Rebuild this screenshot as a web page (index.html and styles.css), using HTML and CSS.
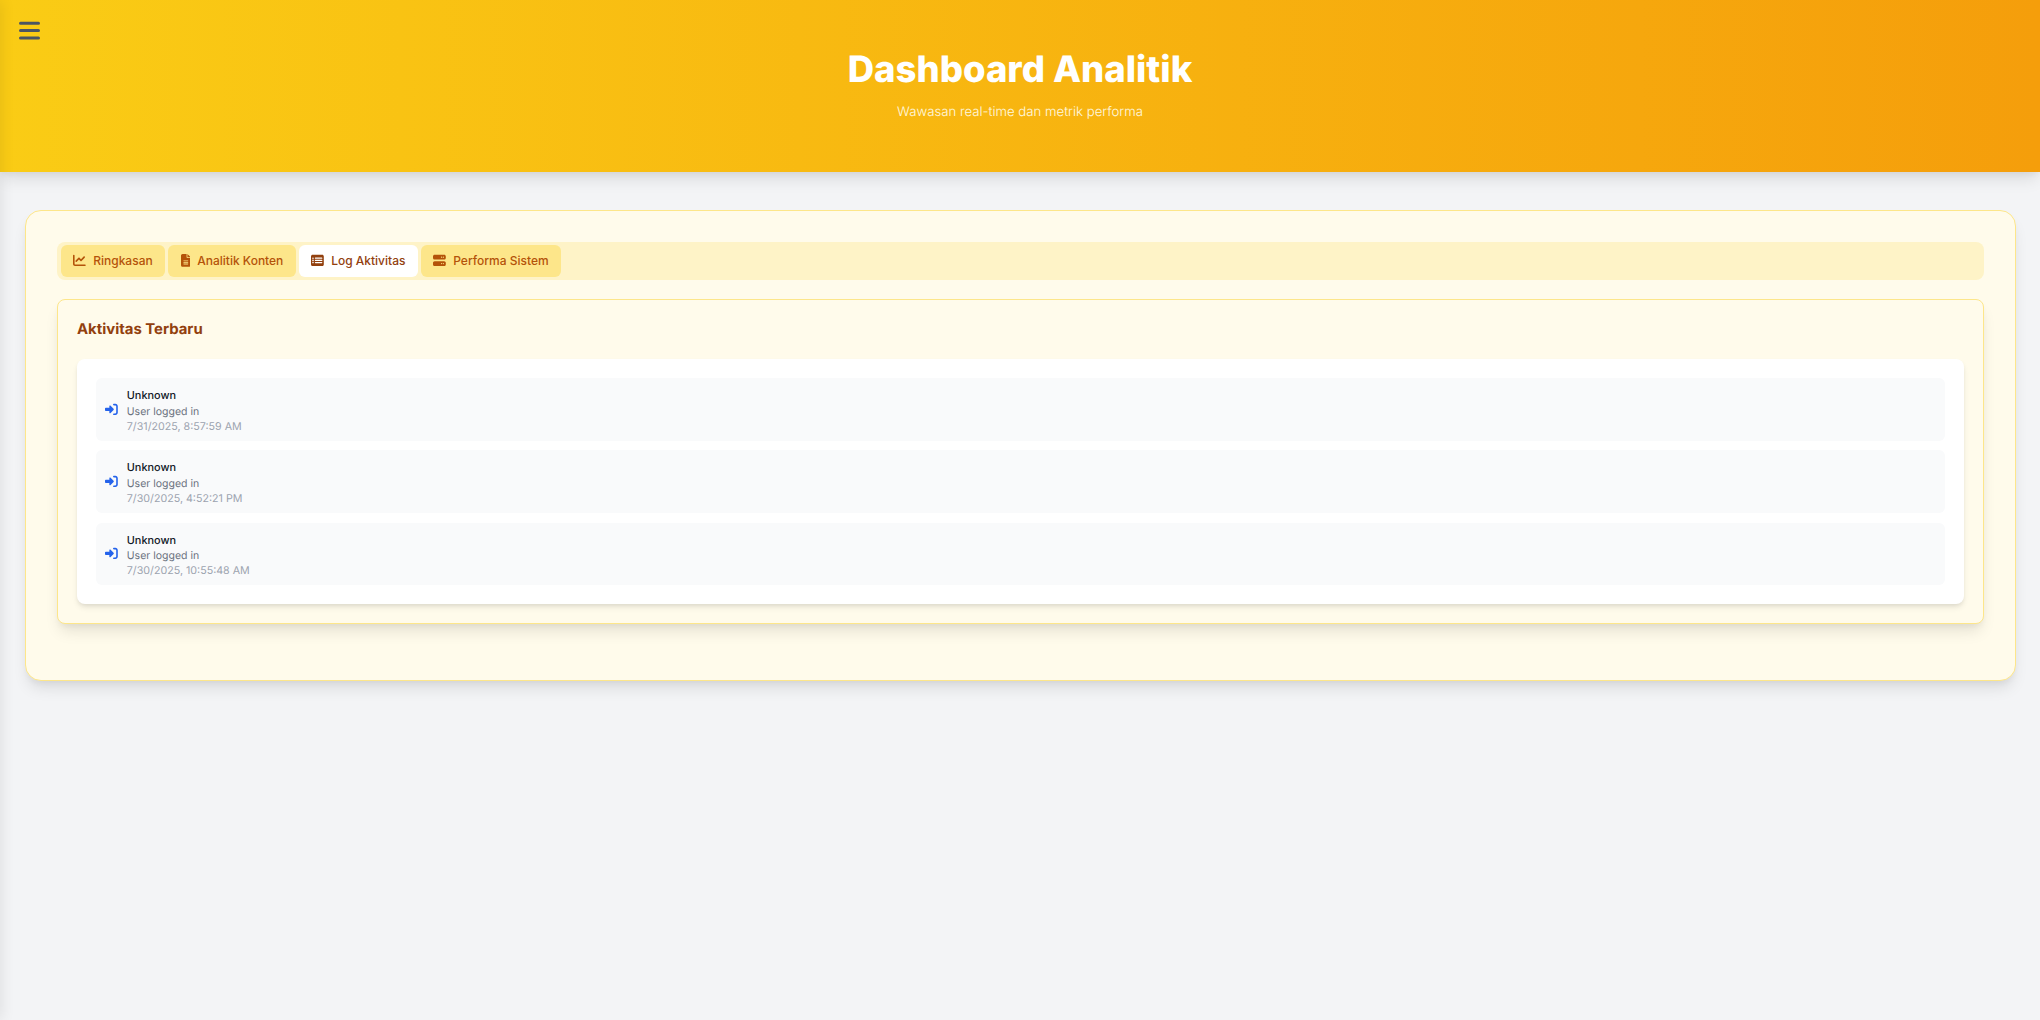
FILE: index.html
```html
<!DOCTYPE html>
<html lang="en">

<head>
    <meta charset="UTF-8">
    <meta name="viewport" content="width=device-width, initial-scale=1.0">
    <title>Dashboard Analitik</title>

    <link rel="stylesheet" href="styles.css">
</head>

<body>

    <div class="sidebar-edge"></div>

    <header class="header">
        <button class="menu-btn" aria-label="Menu">
            <svg viewBox="0 0 24 24" width="24" height="24" fill="none" stroke="#4b5563" stroke-width="3" stroke-linecap="round">
                <path d="M3.5 7.3h18M3.5 14.5h18M3.5 22h18" />
            </svg>
        </button>
        <h1 class="title">Dashboard Analitik</h1>
        <p class="subtitle">Wawasan real-time dan metrik performa</p>
    </header>

    <main class="content">
        <section class="card">

            <!-- tabs -->
            <nav class="tabs">
                <button class="tab">
                    <svg class="tab-icon" viewBox="0 0 512 512"><path d="M64 64c0-18-14-32-32-32S0 46 0 64v336c0 44 36 80 80 80h400c18 0 32-14 32-32s-14-32-32-32H80c-9 0-16-7-16-16V64zm406 86c13-13 13-33 0-46s-33-13-46 0L320 209l-58-58c-13-13-33-13-46 0L106 261c-13 13-13 33 0 46s33 13 46 0l87-87 58 58c13 13 33 13 46 0l127-128z"/></svg>
                    Ringkasan
                </button>
                <button class="tab">
                    <svg class="tab-icon" viewBox="0 0 384 512"><path d="M64 0C29 0 0 29 0 64v384c0 35 29 64 64 64h256c35 0 64-29 64-64V160H256c-18 0-32-14-32-32V0H64zm192 0v128h128L256 0zM112 256h160c9 0 16 7 16 16s-7 16-16 16H112c-9 0-16-7-16-16s7-16 16-16zm0 64h160c9 0 16 7 16 16s-7 16-16 16H112c-9 0-16-7-16-16s7-16 16-16zm0 64h160c9 0 16 7 16 16s-7 16-16 16H112c-9 0-16-7-16-16s7-16 16-16z"/></svg>
                    Analitik Konten
                </button>
                <button class="tab tab-active">
                    <svg class="tab-icon" viewBox="0 0 512 512"><path fill-rule="evenodd" d="M64 32C29 32 0 61 0 96v320c0 35 29 64 64 64h384c35 0 64-29 64-64V96c0-35-29-64-64-64H64zm16 104a32 32 0 1 0 0 64 32 32 0 1 0 0-64zm96 8c-13 0-24 11-24 24s11 24 24 24h256c13 0 24-11 24-24s-11-24-24-24H176zm-96 80a32 32 0 1 0 0 64 32 32 0 1 0 0-64zm96 8c-13 0-24 11-24 24s11 24 24 24h256c13 0 24-11 24-24s-11-24-24-24H176zm-96 80a32 32 0 1 0 0 64 32 32 0 1 0 0-64zm96 8c-13 0-24 11-24 24s11 24 24 24h256c13 0 24-11 24-24s-11-24-24-24H176z"/></svg>
                    Log Aktivitas
                </button>
                <button class="tab">
                    <svg class="tab-icon" viewBox="0 0 512 512"><path fill-rule="evenodd" d="M64 32C29 32 0 61 0 96v64c0 35 29 64 64 64h384c35 0 64-29 64-64V96c0-35-29-64-64-64H64zm280 72a24 24 0 1 1 0 48 24 24 0 1 1 0-48zm48 24a24 24 0 1 1 48 0 24 24 0 1 1-48 0zM64 288c-35 0-64 29-64 64v64c0 35 29 64 64 64h384c35 0 64-29 64-64v-64c0-35-29-64-64-64H64zm280 72a24 24 0 1 1 0 48 24 24 0 1 1 0-48zm48 24a24 24 0 1 1 48 0 24 24 0 1 1-48 0z"/></svg>
                    Performa Sistem
                </button>
            </nav>

            <div class="panel">
                <h2 class="panel-title">Aktivitas Terbaru</h2>

                <div class="activity-box">
                    <div class="activity">
                        <svg class="activity-icon" viewBox="0 0 512 512"><path d="M352 96h64c18 0 32 14 32 32v256c0 18-14 32-32 32h-64c-18 0-32 14-32 32s14 32 32 32h64c53 0 96-43 96-96V128c0-53-43-96-96-96h-64c-18 0-32 14-32 32s14 32 32 32zm-9 183c6-6 9-14 9-23s-3-17-9-23L215 105c-7-7-17-9-26-5s-15 12-15 22v70H32c-18 0-32 14-32 32v64c0 18 14 32 32 32h142v70c0 10 6 18 15 22s19 2 26-5l128-128z"/></svg>
                        <div class="activity-body">
                            <div class="activity-user">Unknown</div>
                            <div class="activity-text">User logged in</div>
                            <div class="activity-time">7/31/2025, 8:57:59 AM</div>
                        </div>
                    </div>
                    <div class="activity">
                        <svg class="activity-icon" viewBox="0 0 512 512"><path d="M352 96h64c18 0 32 14 32 32v256c0 18-14 32-32 32h-64c-18 0-32 14-32 32s14 32 32 32h64c53 0 96-43 96-96V128c0-53-43-96-96-96h-64c-18 0-32 14-32 32s14 32 32 32zm-9 183c6-6 9-14 9-23s-3-17-9-23L215 105c-7-7-17-9-26-5s-15 12-15 22v70H32c-18 0-32 14-32 32v64c0 18 14 32 32 32h142v70c0 10 6 18 15 22s19 2 26-5l128-128z"/></svg>
                        <div class="activity-body">
                            <div class="activity-user">Unknown</div>
                            <div class="activity-text">User logged in</div>
                            <div class="activity-time">7/30/2025, 4:52:21 PM</div>
                        </div>
                    </div>
                    <div class="activity">
                        <svg class="activity-icon" viewBox="0 0 512 512"><path d="M352 96h64c18 0 32 14 32 32v256c0 18-14 32-32 32h-64c-18 0-32 14-32 32s14 32 32 32h64c53 0 96-43 96-96V128c0-53-43-96-96-96h-64c-18 0-32 14-32 32s14 32 32 32zm-9 183c6-6 9-14 9-23s-3-17-9-23L215 105c-7-7-17-9-26-5s-15 12-15 22v70H32c-18 0-32 14-32 32v64c0 18 14 32 32 32h142v70c0 10 6 18 15 22s19 2 26-5l128-128z"/></svg>
                        <div class="activity-body">
                            <div class="activity-user">Unknown</div>
                            <div class="activity-text">User logged in</div>
                            <div class="activity-time">7/30/2025, 10:55:48 AM</div>
                        </div>
                    </div>
                </div>
            </div>

        </section>
    </main>

</body>

</html>
```

FILE: styles.css
```css
* {
    box-sizing: border-box;
}

body {
    margin: 0;
    min-height: 1020px;
    background-color: #f3f4f6;
    font-family: Inter, "Liberation Sans", sans-serif;
    text-rendering: geometricPrecision;
    overflow: hidden;
}

/* shadow of the closed sidebar, the panel itself is off screen */
.sidebar-edge {
    position: fixed;
    top: 0;
    bottom: 0;
    left: -10px;
    width: 10px;
    box-shadow: 0 0 15px rgba(0, 0, 0, 0.12);
    z-index: 5;
}

.header {
    position: relative;
    height: 172px;
    padding-top: 47px;
    text-align: center;
    background: linear-gradient(to right, #facc15, #f59e0b);
    box-shadow: 0 10px 15px -3px rgba(0, 0, 0, 0.1), 0 4px 6px -2px rgba(0, 0, 0, 0.05);
}

.menu-btn {
    position: absolute;
    top: 16px;
    left: 17px;
    padding: 0;
    border: none;
    background: none;
    line-height: 0;
}

.title {
    margin: 0;
    font-size: 36.5px;
    line-height: 44px;
    font-weight: 800;
    color: #fff;
}

.subtitle {
    margin: 11px 0 0;
    font-size: 13.2px;
    line-height: 20px;
    font-weight: 300;
    color: #fff9e0;
}

.content {
    padding: 38px 24px 0 25px;
}

/* main card */
.card {
    height: 471px;
    padding: 31px;
    background-color: #fffbeb;
    border: 1.5px solid #fde68a;
    border-radius: 16px;
    box-shadow: 0 10px 15px -3px rgba(0, 0, 0, 0.1), 0 4px 6px -2px rgba(0, 0, 0, 0.05);
}

.tabs {
    display: flex;
    gap: 3px;
    height: 38px;
    padding: 3px 4px;
    background-color: #fef3c7;
    border-radius: 8px;
}

.tab {
    display: flex;
    align-items: center;
    gap: 7px;
    height: 32px;
    padding: 0 12.6px 1px 12.4px;
    border: none;
    border-radius: 6px;
    background-color: #fde68a;
    color: #b45309;
    font-family: inherit;
    font-size: 12px;
    font-weight: 500;
}

.tab-active {
    background-color: #fff;
    color: #92400e;
}

.tab-icon {
    height: 12.8px;
    width: auto;
    fill: currentColor;
}

.panel {
    margin-top: 19px;
    height: 325px;
    padding: 19px;
    background-color: #fffbeb;
    border: 1.25px solid #fde68a;
    border-radius: 8px;
    box-shadow: 0 10px 15px -3px rgba(0, 0, 0, 0.1), 0 4px 6px -2px rgba(0, 0, 0, 0.05);
}

.panel-title {
    margin: 0 0 19px;
    font-size: 14.9px;
    line-height: 21px;
    font-weight: 700;
    color: #92400e;
}

.activity-box {
    display: flex;
    flex-direction: column;
    gap: 9.7px;
    padding: 19px;
    background-color: #fff;
    border-radius: 8px;
    box-shadow: 0 4px 6px -1px rgba(0, 0, 0, 0.1), 0 2px 4px -1px rgba(0, 0, 0, 0.06);
}

.activity {
    display: flex;
    align-items: center;
    gap: 9px;
    height: 62.6px;
    padding: 0 9px;
    background-color: #f9fafb;
    border-radius: 6px;
}

.activity-icon {
    height: 12.8px;
    width: 12.8px;
    fill: #2563eb;
}

.activity-body {
    padding-top: 1.4px;
}

.activity-user {
    font-size: 10.9px;
    line-height: 16.6px;
    font-weight: 500;
    color: #111827;
}

.activity-text {
    font-size: 10.5px;
    line-height: 16px;
    color: #6b7280;
}

.activity-time {
    font-size: 10.7px;
    line-height: 13px;
    color: #9ca3af;
}
```
